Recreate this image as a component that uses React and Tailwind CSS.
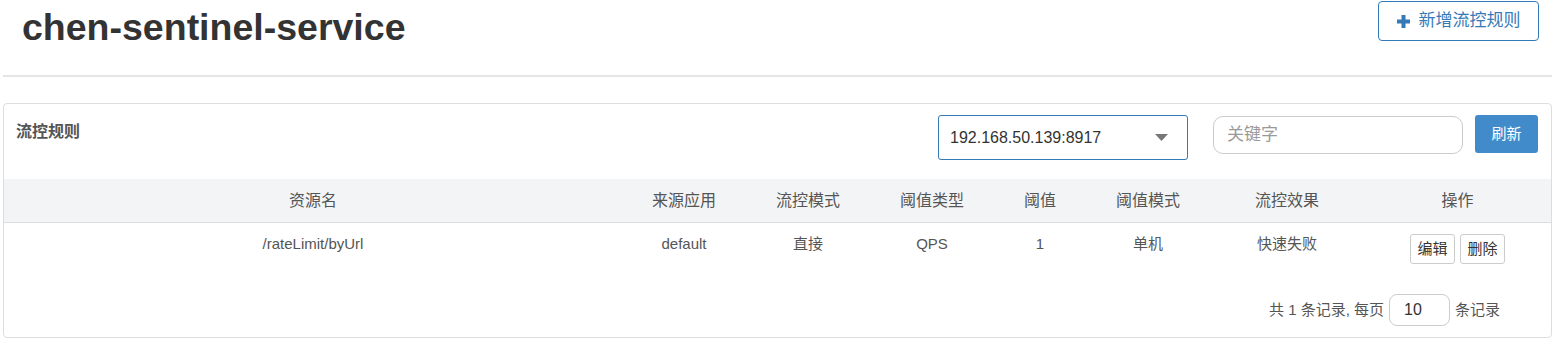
import React from 'react'

const cols = [
  { h: '资源名', w: 'w-[618px]' },
  { h: '来源应用', w: 'w-[124px]' },
  { h: '流控模式', w: 'w-[124px]' },
  { h: '阈值类型', w: 'w-[124px]' },
  { h: '阈值', w: 'w-[92px]' },
  { h: '阈值模式', w: 'w-[124px]' },
  { h: '流控效果', w: 'w-[154px]' },
  { h: '操作', w: 'w-[187px]' },
]

const row = ['/rateLimit/byUrl', 'default', '直接', 'QPS', '1', '单机', '快速失败']

export default function App() {
  return (
    <div className="bg-white w-[1568px] h-[352px] overflow-hidden pl-[3px] pr-[16px] text-[#555] font-['Liberation_Sans','Noto_Sans_CJK_SC',sans-serif]">
      {/* Header */}
      <div className="flex items-start justify-between h-[75px]">
        <h1 className="ml-[19px] mt-[7px] text-[37.5px] leading-[40px] font-bold text-[#333]">chen-sentinel-service</h1>
        <button className="mt-[1px] mr-[13px] h-[40px] w-[161px] flex items-center justify-center gap-[9px] border border-[#337ab7] rounded-[4px] text-[17px] text-[#337ab7] bg-white">
          <svg className="w-[13px] h-[13px]" viewBox="0 0 13 13"><path d="M4.5 0h4v4.5H13v4H8.5V13h-4V8.5H0v-4h4.5z" fill="#337ab7" /></svg>
          新增流控规则
        </button>
      </div>
      <div className="h-[2px] bg-[#e5e5e5]" />

      {/* Card */}
      <div className="mt-[26px] border border-[#ddd] rounded-[4px] h-[235px]">
        <div className="flex items-start h-[75px]">
          <div className="ml-[12px] mt-[16px] text-[16px] font-bold text-[#555]">流控规则</div>
          <div className="ml-auto mt-[11px] flex items-start">
            <div className="w-[250px] h-[45px] border border-[#337ab7] rounded-[3px] flex items-center justify-between pl-[11px] pr-[19px] text-[16px] text-[#333]">
              <span>192.168.50.139:8917</span>
              <svg className="w-[13px] h-[7px]" viewBox="0 0 13 7"><path d="M0 0h13L6.5 7z" fill="#777" /></svg>
            </div>
            <div className="ml-[25px] mt-[1px] w-[250px] h-[38px] border border-[#ccc] rounded-[10px] flex items-center pl-[13px] text-[17px] text-[#999]">关键字</div>
            <button className="ml-[12px] mr-[13px] w-[63px] h-[38px] rounded-[3px] bg-[#428bca] text-white text-[15px] flex items-center justify-center">刷新</button>
          </div>
        </div>

        <div className="flex h-[44px] bg-[#f3f4f6] border-b border-[#ddd] text-[16px] text-[#555]">
          {cols.map(c => (
            <div key={c.h} className={`${c.w} flex items-center justify-center`}>{c.h}</div>
          ))}
        </div>
        <div className="flex h-[55px] text-[15px] text-[#555]">
          {row.map((v, i) => (
            <div key={i} className={`${cols[i].w} text-center pt-[10px]`}>{v}</div>
          ))}
          <div className={`${cols[7].w} flex justify-center gap-[5px] pt-[11px]`}>
            <button className="w-[45px] h-[30px] border border-[#ccc] rounded-[3px] text-[15px] text-[#333] bg-white">编辑</button>
            <button className="w-[45px] h-[30px] border border-[#ccc] rounded-[3px] text-[15px] text-[#333] bg-white">删除</button>
          </div>
        </div>

        <div className="flex items-center justify-end mt-[16px] pr-[51px] text-[15px] text-[#555]">
          <span>共 1 条记录, 每页</span>
          <div className="ml-[5px] w-[61px] h-[32px] border border-[#ccc] rounded-[8px] flex items-center pl-[14px] text-[16px] text-[#333]">10</div>
          <span className="ml-[5px]">条记录</span>
        </div>
      </div>
    </div>
  )
}
